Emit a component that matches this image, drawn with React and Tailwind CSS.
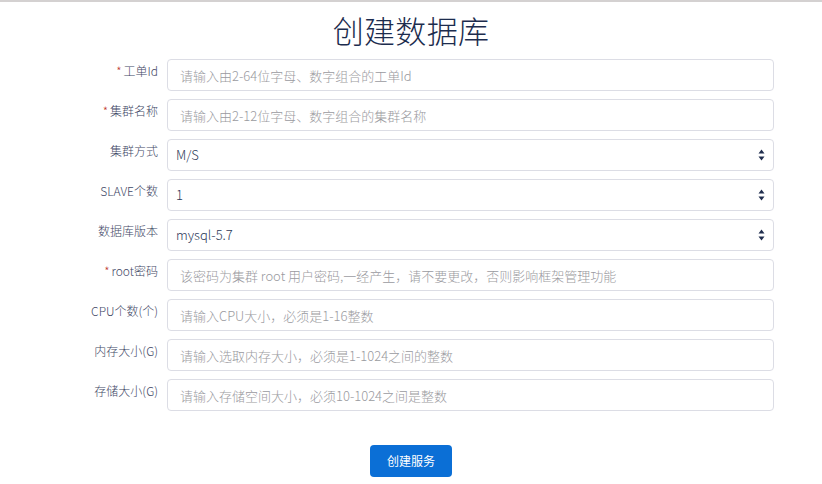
import { useState } from 'react';

const fields = [
  { label: '工单Id', required: true, type: 'input', placeholder: '请输入由2-64位字母、数字组合的工单Id' },
  { label: '集群名称', required: true, type: 'input', placeholder: '请输入由2-12位字母、数字组合的集群名称' },
  { label: '集群方式', type: 'select', options: ['M/S', 'M/M'] },
  { label: 'SLAVE个数', type: 'select', options: ['1', '2', '3'] },
  { label: '数据库版本', type: 'select', options: ['mysql-5.7', 'mysql-5.6'] },
  { label: 'root密码', required: true, type: 'input', placeholder: '该密码为集群 root 用户密码,一经产生，请不要更改，否则影响框架管理功能' },
  { label: 'CPU个数(个)', type: 'input', placeholder: '请输入CPU大小，必须是1-16整数' },
  { label: '内存大小(G)', type: 'input', placeholder: '请输入选取内存大小，必须是1-1024之间的整数' },
  { label: '存储大小(G)', type: 'input', placeholder: '请输入存储空间大小，必须10-1024之间是整数' },
];

function Arrows() {
  return (
    <svg width="7" height="14" viewBox="0 0 7 14" className="absolute right-[9px] top-[9px] pointer-events-none">
      <path d="M3.5 1.5 L6.5 5.5 L0.5 5.5 Z" fill="#1f2d4d" />
      <path d="M3.5 12.5 L6.5 8.5 L0.5 8.5 Z" fill="#1f2d4d" />
    </svg>
  );
}

export default function App() {
  const [values, setValues] = useState({});

  const handleChange = (i, v) => {
    setValues(prev => ({ ...prev, [i]: v }));
  };

  return (
    <div
      className="min-h-screen bg-white border-t-2 border-[#d4d1d1]"
      style={{ fontFamily: '"Noto Sans CJK SC", "Noto Sans", sans-serif' }}
    >
      <h1 className="h-[57px] flex items-center justify-center text-[31px] font-light text-[#1c2c4e] tracking-[0.3px]">
        创建数据库
      </h1>

      <form className="flex flex-col gap-[8px]" onSubmit={e => e.preventDefault()}>
        {fields.map((f, i) => (
          <div key={i} className="flex items-start">
            <label className="w-[158px] pt-[3px] text-right text-[12px] leading-[18px] font-light text-[#3f4866]">
              {f.required && <span className="text-[#c0392b] mr-[2px]">*</span>}
              {f.label}
            </label>
            <div className="ml-[9px] w-[607px] relative">
              {f.type === 'input' ? (
                <input
                  type="text"
                  value={values[i] || ''}
                  onChange={e => handleChange(i, e.target.value)}
                  placeholder={f.placeholder}
                  className="block w-full h-[32px] rounded-[4px] border border-[#dcdde5] px-[12px] text-[13px] font-light text-[#3a4566] placeholder:text-[#9a9aa0] outline-none"
                />
              ) : (
                <>
                  <select
                    value={values[i] || f.options[0]}
                    onChange={e => handleChange(i, e.target.value)}
                    className="block w-full h-[32px] appearance-none rounded-[4px] border border-[#dcdde5] px-[8px] text-[13px] font-light text-[#2c3858] bg-white outline-none"
                  >
                    {f.options.map(o => (
                      <option key={o} value={o}>{o}</option>
                    ))}
                  </select>
                  <Arrows />
                </>
              )}
            </div>
          </div>
        ))}

        <div className="flex justify-center mt-[26px]">
          <button
            type="submit"
            className="w-[82px] h-[32px] rounded-[4px] bg-[#0b6fd6] text-white text-[12px]"
          >
            创建服务
          </button>
        </div>
      </form>
    </div>
  );
}
